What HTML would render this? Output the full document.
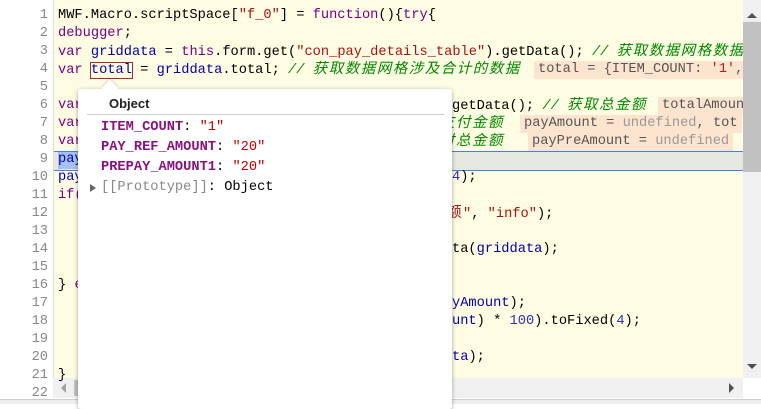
<!DOCTYPE html>
<html><head><meta charset="utf-8"><style>
body{margin:0;width:761px;height:403px;overflow:hidden;background:#fff;position:relative;font-family:"Liberation Mono","Noto Sans CJK SC",monospace;font-size:13.7px}
.ed{position:absolute;left:53px;top:0;width:690px;height:378px;background:#fefce2;border-left:1px solid #ddd}
.ln{position:absolute;left:0;width:48px;text-align:right;color:#888;height:18px;line-height:18px}
.c{position:absolute;white-space:pre;height:18px;line-height:18px;color:#000}
.k{color:#770088}.v{color:#0000aa}.s{color:#aa1111}.n{color:#116644}.m{color:#008800;font-style:italic}
.z{font-size:14.5px;letter-spacing:1.5px}
.b{background:#fde4cf;color:#555;padding:0 4px}.u{color:#999}.r{color:#c41a16}
.pop{position:absolute;left:78px;top:89px;width:374px;height:320px;background:#fff;border-radius:3px;box-shadow:0 1px 4px rgba(0,0,0,.35)}
.pk{color:#881280;font-weight:bold}.pv{color:#c80000}
</style></head><body>
<div style="position:absolute;left:273px;top:0;width:60px;height:2px;background:#1a73e8"></div>
<div class="ed"></div>
<div style="position:absolute;left:54px;top:151px;width:689px;height:18px;background:#e5e8e0;border-top:1px solid #4a7de0;border-bottom:1px solid #4a7de0"></div>
<div style="position:absolute;left:58px;top:152px;width:25px;height:17px;background:#a8c0f0"></div>
<div style="position:absolute;left:743px;top:0;width:18px;height:378px;background:#f0f0f0"></div>
<div style="position:absolute;left:743px;top:22px;width:18px;height:150px;background:#c1c1c1"></div>
<div style="position:absolute;left:747px;top:13px;width:0;height:0;border-left:5px solid transparent;border-right:5px solid transparent;border-bottom:5px solid #505050"></div>
<div style="position:absolute;left:747px;top:364px;width:0;height:0;border-left:5px solid transparent;border-right:5px solid transparent;border-top:5px solid #505050"></div>
<div style="position:absolute;left:53px;top:378px;width:690px;height:20px;background:#f0f0f0"></div>
<div style="position:absolute;left:74px;top:380px;width:6px;height:16px;background:#c1c1c1"></div>
<div style="position:absolute;left:61px;top:383px;width:0;height:0;border-top:5px solid transparent;border-bottom:5px solid transparent;border-right:5px solid #a0a0a0"></div>
<div style="position:absolute;left:729px;top:383px;width:0;height:0;border-top:5px solid transparent;border-bottom:5px solid transparent;border-left:5px solid #505050"></div>
<div style="position:absolute;left:0;top:399px;width:761px;height:4px;background:#eee;border-top:1px solid #ccc"></div>

<div class="ln" style="top:7px">1</div><div class="ln" style="top:25px">2</div><div class="ln" style="top:43px">3</div><div class="ln" style="top:61px">4</div><div class="ln" style="top:79px">5</div><div class="ln" style="top:97px">6</div><div class="ln" style="top:115px">7</div><div class="ln" style="top:133px">8</div><div class="ln" style="top:151px">9</div><div class="ln" style="top:169px">10</div><div class="ln" style="top:187px">11</div><div class="ln" style="top:205px">12</div><div class="ln" style="top:223px">13</div><div class="ln" style="top:241px">14</div><div class="ln" style="top:259px">15</div><div class="ln" style="top:277px">16</div><div class="ln" style="top:295px">17</div><div class="ln" style="top:313px">18</div><div class="ln" style="top:331px">19</div><div class="ln" style="top:349px">20</div><div class="ln" style="top:367px">21</div><div class="ln" style="top:385px">22</div>

<div class="c" style="left:58px;top:7px">MWF.Macro.scriptSpace[<span class="s">"f_0"</span>] = <span class="k">function</span>(){<span class="k">try</span>{</div>
<div class="c k" style="left:58px;top:25px">debugger<span style="color:#000">;</span></div>
<div class="c" style="left:58px;top:43px;width:685px;overflow:hidden"><span class="k">var</span> <span class="v">griddata</span> = <span class="k">this</span>.form.get(<span class="s">"con_pay_details_table"</span>).getData(); <span class="m">// <span class="z">获取数据网格数据</span></span></div>
<div class="c" style="left:58px;top:61px;width:685px;overflow:hidden"><span class="k">var</span> <span class="v" style="outline:1px solid #a52a2a">total</span> = <span class="v">griddata</span>.total; <span class="m">// <span class="z">获取数据网格涉及合计的数据</span></span> <span class="b" style="position:absolute;left:476px">total = {ITEM_COUNT: <span class="r">'1'</span>, </span></div>
<div class="c k" style="left:58px;top:97px">var</div><div class="c k" style="left:58px;top:115px">var</div><div class="c k" style="left:58px;top:133px">var</div>
<div class="c v" style="left:58px;top:151px">pay</div><div class="c v" style="left:58px;top:169px">pay</div>
<div class="c k" style="left:58px;top:187px">if(</div>
<div class="c" style="left:58px;top:277px">} <span class="k">e</span></div>
<div class="c" style="left:58px;top:367px">}</div>

<div class="c" style="left:452px;top:97px;width:291px;overflow:hidden">getData(); <span class="m">// <span class="z">获取总金额</span></span> <span class="b" style="position:absolute;left:206px">totalAmount</span></div>
<div class="c" style="left:440px;top:115px;width:303px;overflow:hidden"><span class="m"><span class="z">支付金额</span></span> <span class="b" style="position:absolute;left:80px">payAmount = <span class="u">undefined</span>, tot</span></div>
<div class="c" style="left:440px;top:133px;width:303px;overflow:hidden"><span class="m"><span class="z">付总金额</span></span> <span class="b" style="position:absolute;left:88px">payPreAmount = <span class="u">undefined</span></span></div>
<div class="c" style="left:452px;top:169px"><span style="color:#3030c0">4</span>);</div>
<div class="c" style="left:447px;top:205px"><span class="s"><span class="z">额</span>"</span>, <span class="s">"info"</span>);</div>
<div class="c" style="left:452px;top:241px">ta(<span class="v">griddata</span>);</div>
<div class="c" style="left:452px;top:295px"><span class="v">yAmount</span>);</div>
<div class="c" style="left:452px;top:313px"><span class="v">unt</span>) * <span style="color:#3030c0">100</span>).toFixed(<span style="color:#3030c0">4</span>);</div>
<div class="c" style="left:452px;top:349px"><span class="v">ta</span>);</div>

<div class="pop">
<div style="position:absolute;left:26px;top:-7px;width:12px;height:12px;background:#fff;transform:rotate(45deg);box-shadow:-1px -1px 2px rgba(0,0,0,.15)"></div>
<div style="position:absolute;left:0;top:0;width:374px;height:20px;background:#fff;border-radius:3px"></div>
<div class="c" style="left:31px;top:6px;font-weight:bold;font-family:'Liberation Sans',sans-serif;font-size:13px;color:#222">Object</div>
<div style="position:absolute;left:9px;top:25px;width:357px;height:1px;background:#ccc"></div>
<div class="c" style="left:23px;top:30px"><span class="pk">ITEM_COUNT</span>: <span class="pv">"1"</span></div>
<div class="c" style="left:23px;top:50px"><span class="pk">PAY_REF_AMOUNT</span>: <span class="pv">"20"</span></div>
<div class="c" style="left:23px;top:70px"><span class="pk">PREPAY_AMOUNT1</span>: <span class="pv">"20"</span></div>
<div style="position:absolute;left:12px;top:95px;width:0;height:0;border-top:4px solid transparent;border-bottom:4px solid transparent;border-left:6px solid #666"></div>
<div class="c" style="left:23px;top:90px"><span style="color:#888">[[Prototype]]</span>: Object</div>
</div>
</body></html>
